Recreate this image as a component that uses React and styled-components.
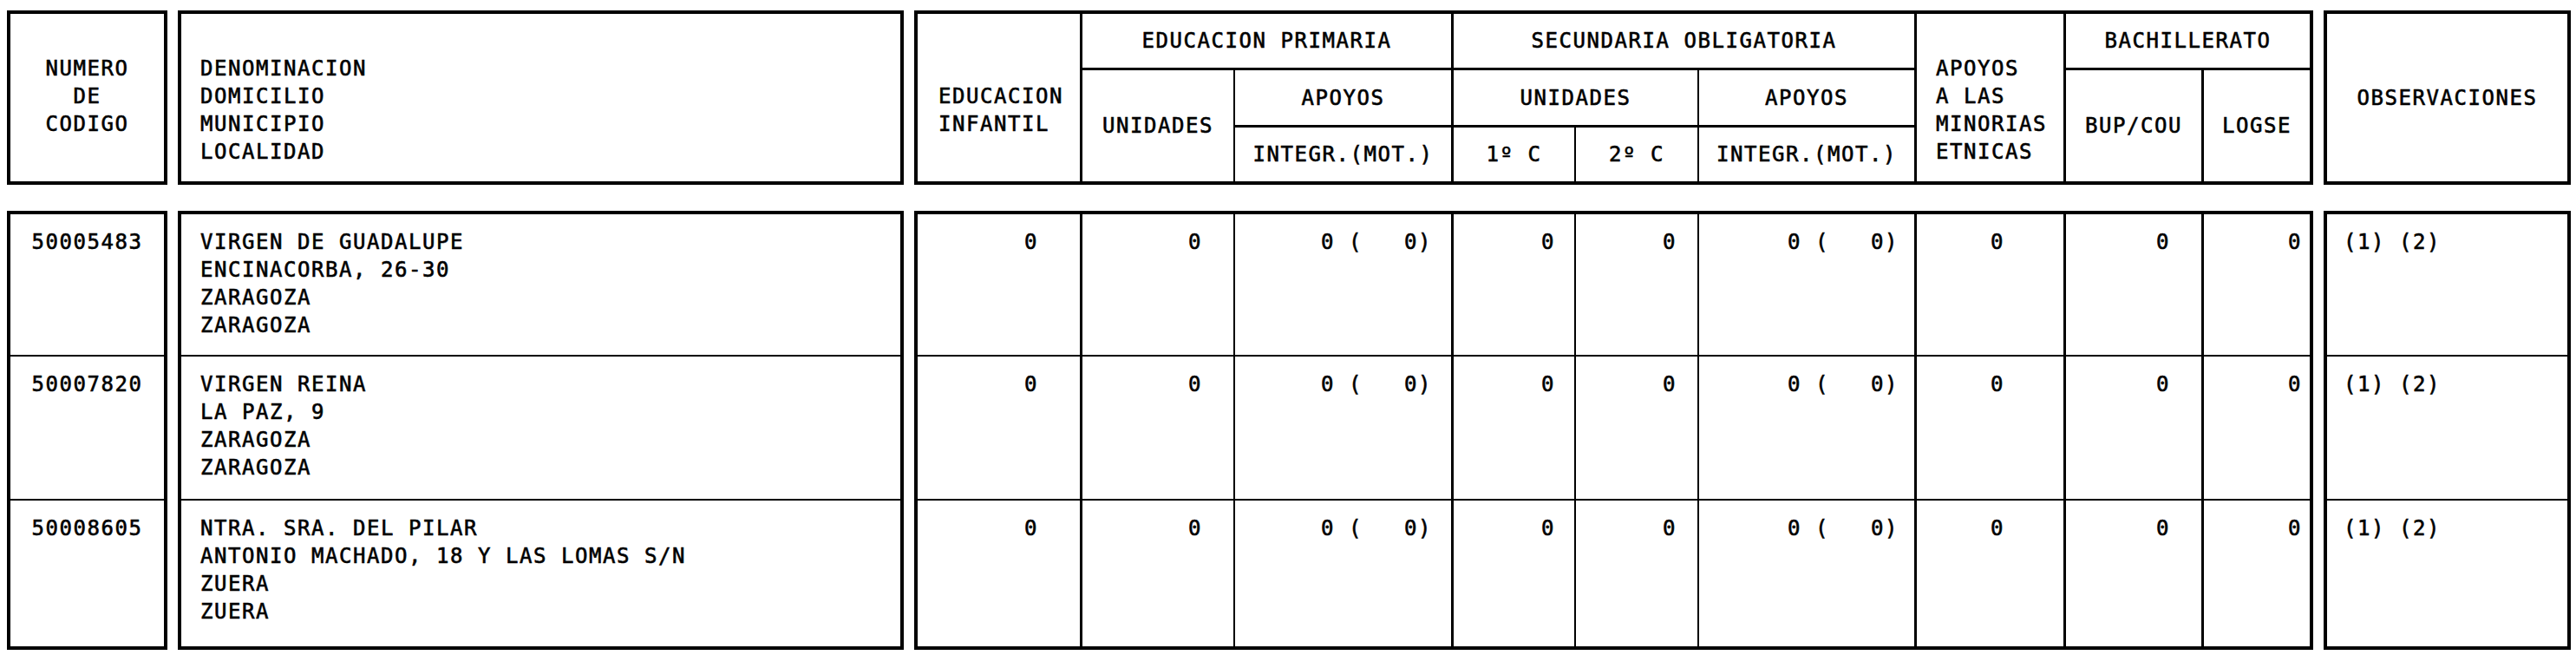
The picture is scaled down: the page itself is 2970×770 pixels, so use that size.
import React from 'react';
import styled, { createGlobalStyle } from 'styled-components';

const GlobalStyle = createGlobalStyle`
  *, *::before, *::after { box-sizing: border-box; }
  body { margin: 0; background: #fff; }
`;

// widths of the columns inside the big middle box (line on the right included)
const cols = [
  { w: 190, line: 3, pad: 48 },
  { w: 176, line: 2, pad: 36 },
  { w: 252, line: 3, pad: 22 },
  { w: 141, line: 2, pad: 22 },
  { w: 142, line: 2, pad: 24 },
  { w: 251, line: 3, pad: 18 },
  { w: 172, line: 3, pad: 68 },
  { w: 159, line: 3, pad: 36 },
  { w: 122, line: 0, pad: 9 },
];
const colTemplate = cols.map(c => `${c.w}px`).join(' ');

const centros = [
  {
    code: '50005483',
    lines: ['VIRGEN DE GUADALUPE', 'ENCINACORBA, 26-30', 'ZARAGOZA', 'ZARAGOZA'],
    values: ['0', '0', '0 (   0)', '0', '0', '0 (   0)', '0', '0', '0'],
    obs: '(1) (2)',
  },
  {
    code: '50007820',
    lines: ['VIRGEN REINA', 'LA PAZ, 9', 'ZARAGOZA', 'ZARAGOZA'],
    values: ['0', '0', '0 (   0)', '0', '0', '0 (   0)', '0', '0', '0'],
    obs: '(1) (2)',
  },
  {
    code: '50008605',
    lines: ['NTRA. SRA. DEL PILAR', 'ANTONIO MACHADO, 18 Y LAS LOMAS S/N', 'ZUERA', 'ZUERA'],
    values: ['0', '0', '0 (   0)', '0', '0', '0 (   0)', '0', '0', '0'],
    obs: '(1) (2)',
  },
];

const App = () => {
  return (
    <>
      <GlobalStyle />
      <Sheet>
        <Box>
          <HeadLabel $center>
            NUMERO<br />DE<br />CODIGO
          </HeadLabel>
        </Box>
        <Box>
          <HeadLabel>
            DENOMINACION<br />DOMICILIO<br />MUNICIPIO<br />LOCALIDAD
          </HeadLabel>
        </Box>
        <HeadGrid>
          <HeadCell $col="1" $row="1 / 4" $r={3} $top={79} $left={24}>
            EDUCACION<br />INFANTIL
          </HeadCell>
          <HeadCell $col="2 / 4" $row="1" $r={3} $b={3}>EDUCACION PRIMARIA</HeadCell>
          <HeadCell $col="2" $row="2 / 4" $r={2}>UNIDADES</HeadCell>
          <HeadCell $col="3" $row="2" $r={3} $b={3}>APOYOS</HeadCell>
          <HeadCell $col="3" $row="3" $r={3}>INTEGR.(MOT.)</HeadCell>
          <HeadCell $col="4 / 7" $row="1" $r={3} $b={3}>SECUNDARIA OBLIGATORIA</HeadCell>
          <HeadCell $col="4 / 6" $row="2" $r={2} $b={3}>UNIDADES</HeadCell>
          <HeadCell $col="6" $row="2" $r={3} $b={3}>APOYOS</HeadCell>
          <HeadCell $col="4" $row="3" $r={2}>1º C</HeadCell>
          <HeadCell $col="5" $row="3" $r={2}>2º C</HeadCell>
          <HeadCell $col="6" $row="3" $r={3}>INTEGR.(MOT.)</HeadCell>
          <HeadCell $col="7" $row="1 / 4" $r={3} $top={47} $left={22}>
            APOYOS<br />A LAS<br />MINORIAS<br />ETNICAS
          </HeadCell>
          <HeadCell $col="8 / 10" $row="1" $b={3}>BACHILLERATO</HeadCell>
          <HeadCell $col="8" $row="2 / 4" $r={3}>BUP/COU</HeadCell>
          <HeadCell $col="9" $row="2 / 4">LOGSE</HeadCell>
        </HeadGrid>
        <Box>
          <HeadLabel $center $middle>OBSERVACIONES</HeadLabel>
        </Box>

        <RowsBox>
          {centros.map((c, i) => (
            <RowCell key={c.code} $last={i === centros.length - 1} $center>
              {c.code}
            </RowCell>
          ))}
        </RowsBox>
        <RowsBox>
          {centros.map((c, i) => (
            <RowCell key={c.code} $last={i === centros.length - 1} $left={22}>
              {c.lines.map(l => (
                <div key={l + i}>{l}</div>
              ))}
            </RowCell>
          ))}
        </RowsBox>
        <DataGrid>
          {centros.map((c, i) =>
            c.values.map((v, j) => (
              <NumCell
                key={`${c.code}-${j}`}
                $r={cols[j].line}
                $pad={cols[j].pad}
                $last={i === centros.length - 1}
              >
                {v}
              </NumCell>
            ))
          )}
        </DataGrid>
        <RowsBox>
          {centros.map((c, i) => (
            <RowCell key={c.code} $last={i === centros.length - 1} $left={19}>
              {c.obs}
            </RowCell>
          ))}
        </RowsBox>
      </Sheet>
    </>
  );
};

export default App;

const Sheet = styled.div`
  display: grid;
  grid-template-columns: 185px 837px 1613px 285px;
  grid-template-rows: 201px 506px;
  column-gap: 12px;
  row-gap: 30px;
  padding: 12px 0 0 8px;
  font-family: 'DejaVu Sans Mono', monospace;
  font-size: 24px;
  letter-spacing: 1.55px;
  line-height: 32px;
  color: #000;
  -webkit-text-stroke: 0.6px #000;
`;

const Box = styled.div`
  border: 4px solid #000;
  display: flex;
  flex-direction: column;
`;

const HeadLabel = styled.div`
  flex: 1;
  display: flex;
  flex-direction: column;
  justify-content: ${p => (p.$middle ? 'center' : 'flex-start')};
  padding: ${p => (p.$middle ? '0' : '47px 0 0 22px')};
  ${p => p.$center && 'padding-left: 0; text-align: center;'}
`;

const HeadGrid = styled.div`
  border: 4px solid #000;
  display: grid;
  grid-template-columns: ${colTemplate};
  grid-template-rows: 65px 66px 1fr;
`;

const HeadCell = styled.div`
  grid-column: ${p => p.$col};
  grid-row: ${p => p.$row};
  border-right: ${p => p.$r || 0}px solid #000;
  border-bottom: ${p => p.$b || 0}px solid #000;
  display: flex;
  flex-direction: column;
  white-space: pre;
  align-items: ${p => (p.$top ? 'flex-start' : 'center')};
  justify-content: ${p => (p.$top ? 'flex-start' : 'center')};
  padding: ${p => (p.$top ? `${p.$top}px 0 0 ${p.$left}px` : '0')};
  text-align: ${p => (p.$top ? 'left' : 'center')};
`;

const RowsBox = styled.div`
  border: 4px solid #000;
  display: grid;
  grid-template-rows: 164px 166px 1fr;
`;

const RowCell = styled.div`
  border-bottom: ${p => (p.$last ? 0 : 2)}px solid #000;
  padding: 16px 0 0 ${p => p.$left || 0}px;
  text-align: ${p => (p.$center ? 'center' : 'left')};
  white-space: pre;
`;

const DataGrid = styled.div`
  border: 4px solid #000;
  display: grid;
  grid-template-columns: ${colTemplate};
  grid-template-rows: 164px 166px 1fr;
`;

const NumCell = styled.div`
  border-right: ${p => p.$r}px solid #000;
  border-bottom: ${p => (p.$last ? 0 : 2)}px solid #000;
  padding: 16px ${p => p.$pad}px 0 0;
  text-align: right;
  white-space: pre;
`;
